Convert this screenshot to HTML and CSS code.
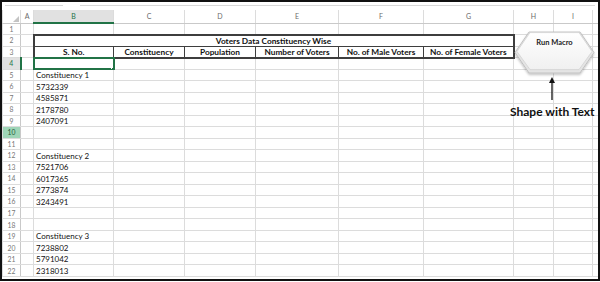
FILE: index.html
```html
<!DOCTYPE html>
<html lang="en">
<head>
    <meta charset="UTF-8">
    <title>Voters Data Constituency Wise</title>
    <link rel="stylesheet" href="styles.css">
</head>
<body>
    <div class="frame">
        <div class="formula-edge">
            <span class="edge-left"></span>
            <span class="edge-right"></span>
        </div>

        <table class="grid">
            <colgroup>
                <col class="c-row"><col class="c-a"><col class="c-b"><col class="c-c"><col class="c-d"><col class="c-e"><col class="c-f"><col class="c-g"><col class="c-h"><col class="c-i"><col class="c-j">
            </colgroup>
            <thead>
                <tr>
                    <th class="corner"></th><th>A</th><th class="active">B</th><th>C</th><th>D</th><th>E</th><th>F</th><th>G</th><th>H</th><th>I</th><th></th>
                </tr>
            </thead>
            <tbody>
                <tr><th>1</th><td></td><td></td><td></td><td></td><td></td><td></td><td></td><td></td><td></td><td></td></tr>
                <tr><th>2</th><td></td><td class="title" colspan="6">Voters Data Constituency Wise</td><td></td><td></td><td></td></tr>
                <tr><th>3</th><td></td><td class="hd first">S. No.</td><td class="hd">Constituency</td><td class="hd">Population</td><td class="hd">Number of Voters</td><td class="hd">No. of Male Voters</td><td class="hd last">No. of Female Voters</td><td></td><td></td><td></td></tr>
                <tr><th class="cur">4</th><td></td><td class="sel"></td><td></td><td></td><td></td><td></td><td></td><td></td><td></td><td></td></tr>
                <tr><th>5</th><td></td><td>Constituency 1</td><td></td><td></td><td></td><td></td><td></td><td></td><td></td><td></td></tr>
                <tr><th>6</th><td></td><td>5732339</td><td></td><td></td><td></td><td></td><td></td><td></td><td></td><td></td></tr>
                <tr><th>7</th><td></td><td>4585871</td><td></td><td></td><td></td><td></td><td></td><td></td><td></td><td></td></tr>
                <tr><th>8</th><td></td><td>2178780</td><td></td><td></td><td></td><td></td><td></td><td></td><td></td><td></td></tr>
                <tr><th>9</th><td></td><td>2407091</td><td></td><td></td><td></td><td></td><td></td><td></td><td></td><td></td></tr>
                <tr><th class="hl">10</th><td></td><td></td><td></td><td></td><td></td><td></td><td></td><td></td><td></td><td></td></tr>
                <tr><th>11</th><td></td><td></td><td></td><td></td><td></td><td></td><td></td><td></td><td></td><td></td></tr>
                <tr><th>12</th><td></td><td>Constituency 2</td><td></td><td></td><td></td><td></td><td></td><td></td><td></td><td></td></tr>
                <tr><th>13</th><td></td><td>7521706</td><td></td><td></td><td></td><td></td><td></td><td></td><td></td><td></td></tr>
                <tr><th>14</th><td></td><td>6017365</td><td></td><td></td><td></td><td></td><td></td><td></td><td></td><td></td></tr>
                <tr><th>15</th><td></td><td>2773874</td><td></td><td></td><td></td><td></td><td></td><td></td><td></td><td></td></tr>
                <tr><th>16</th><td></td><td>3243491</td><td></td><td></td><td></td><td></td><td></td><td></td><td></td><td></td></tr>
                <tr><th>17</th><td></td><td></td><td></td><td></td><td></td><td></td><td></td><td></td><td></td><td></td></tr>
                <tr><th>18</th><td></td><td></td><td></td><td></td><td></td><td></td><td></td><td></td><td></td><td></td></tr>
                <tr><th>19</th><td></td><td>Constituency 3</td><td></td><td></td><td></td><td></td><td></td><td></td><td></td><td></td></tr>
                <tr><th>20</th><td></td><td>7238802</td><td></td><td></td><td></td><td></td><td></td><td></td><td></td><td></td></tr>
                <tr><th>21</th><td></td><td>5791042</td><td></td><td></td><td></td><td></td><td></td><td></td><td></td><td></td></tr>
                <tr><th>22</th><td></td><td>2318013</td><td></td><td></td><td></td><td></td><td></td><td></td><td></td><td></td></tr>
            </tbody>
        </table>

        <!-- hexagon shape + arrow floating over the sheet -->
        <svg class="shape" width="88" height="76" viewBox="0 0 88 76">
            <defs>
                <linearGradient id="face" x1="0" y1="0" x2="0" y2="1">
                    <stop offset="0" stop-color="#ffffff"/>
                    <stop offset="1" stop-color="#f0f0f0"/>
                </linearGradient>
                <filter id="drop" x="-20%" y="-20%" width="140%" height="150%">
                    <feDropShadow dx="0" dy="1.5" stdDeviation="1" flood-color="#000" flood-opacity="0.25"/>
                </filter>
            </defs>
            <polygon points="19,4 70,4 84,24.5 70,45 19,45 5,24.5" fill="#e4e4e4" stroke="#b8b8b8" stroke-width="0.8" filter="url(#drop)"/>
            <polygon points="20,4.6 69,4.6 82,23.5 69,41.6 20,41.6 7,23.5" fill="url(#face)" stroke="#d0d0d0" stroke-width="0.7"/>
            <text x="44.5" y="16.5" class="shape-text">Run Macro</text>
            <line x1="42" y1="53" x2="42" y2="72" stroke="#111" stroke-width="1.3"/>
            <polygon points="42,49 39,55 45,55" fill="#111"/>
        </svg>
        <div class="callout">Shape with Text</div>
    </div>
</body>
</html>
```

FILE: styles.css
```css
body {
    margin: 0;
    background: #fff;
    font-family: "Lato", "Liberation Sans", sans-serif;
}

.frame {
    position: relative;
    width: 600px;
    height: 281px;
    box-sizing: border-box;
    border: 2px solid #111;
    overflow: hidden;
    background: #fff;
}

.formula-edge {
    height: 8px;
    box-sizing: border-box;
    padding: 3px 3px 0;
    display: flex;
    gap: 17px;
}

.edge-left, .edge-right {
    height: 1px;
    background: #d8d8d8;
}

.edge-left {
    width: 58px;
}

.edge-right {
    flex: 1;
}

.grid {
    border-collapse: collapse;
    table-layout: fixed;
    width: 596px;
    font-size: 8px;
    color: #111;
}

.c-row { width: 18px; }
.c-a { width: 13px; }
.c-b { width: 80px; }
.c-c { width: 71px; }
.c-d { width: 71px; }
.c-e { width: 83px; }
.c-f { width: 85px; }
.c-g { width: 90px; }
.c-h { width: 40px; }
.c-i { width: 39px; }
.c-j { width: 6px; }

.grid td, .grid th {
    border: 1px solid #dcdcdc;
    padding: 0 2px;
    white-space: nowrap;
    overflow: hidden;
    line-height: 10px;
}

.grid td {
    vertical-align: bottom;
}

.grid thead tr {
    height: 13px;
}

.grid thead th {
    font-weight: normal;
    font-size: 7px;
    color: #6b6b6b;
    text-align: center;
    border-top: none;
    border-bottom: 1px solid #c9c9c9;
    padding: 0;
}

.grid thead th.active {
    background: #e1e1e1;
    color: #217346;
    border-bottom: 2px solid #217346;
}

.corner {
    position: relative;
}

.corner::after {
    content: "";
    position: absolute;
    right: 1px;
    bottom: 1px;
    border-left: 6px solid transparent;
    border-bottom: 6px solid #c4c4c4;
}

.grid tbody tr {
    height: 11.53px;
}

.grid tbody th {
    font-weight: normal;
    font-size: 6.8px;
    color: #777;
    text-align: center;
    padding: 0;
    border-right: 1px solid #c9c9c9;
}

.grid tbody th.cur {
    background: #e1e1e1;
    color: #217346;
    border-right: 2px solid #217346;
}

.grid tbody th.hl {
    background: #9fd5b7;
    color: #1f5a39;
}

.grid td.title {
    font-size: 8.3px;
    font-weight: 700;
    text-align: center;
    border: 2px solid #3e3e3e;
    border-bottom: 1px solid #3e3e3e;
}

.grid td.hd {
    font-size: 8.3px;
    font-weight: 700;
    text-align: center;
    border: 1px solid #3e3e3e;
    border-bottom: 2px solid #3e3e3e;
}

.grid td.hd.first {
    border-left: 2px solid #3e3e3e;
}

.grid td.hd.last {
    border-right: 2px solid #3e3e3e;
}

.grid td.sel {
    position: relative;
    outline: 2px solid #217346;
    outline-offset: -1px;
}

.grid td.sel::after {
    content: "";
    position: absolute;
    right: -3px;
    bottom: -3px;
    width: 3px;
    height: 3px;
    background: #217346;
    border: 1px solid #fff;
}

.shape {
    position: absolute;
    left: 508px;
    top: 26px;
}

.shape-text {
    font-family: "Lato", "Liberation Sans", sans-serif;
    font-size: 7.5px;
    font-weight: 700;
    fill: #222;
    text-anchor: middle;
}

.callout {
    position: absolute;
    left: 508px;
    top: 103px;
    font-size: 12px;
    line-height: 14px;
    font-weight: 700;
    color: #111;
    white-space: nowrap;
}
```
